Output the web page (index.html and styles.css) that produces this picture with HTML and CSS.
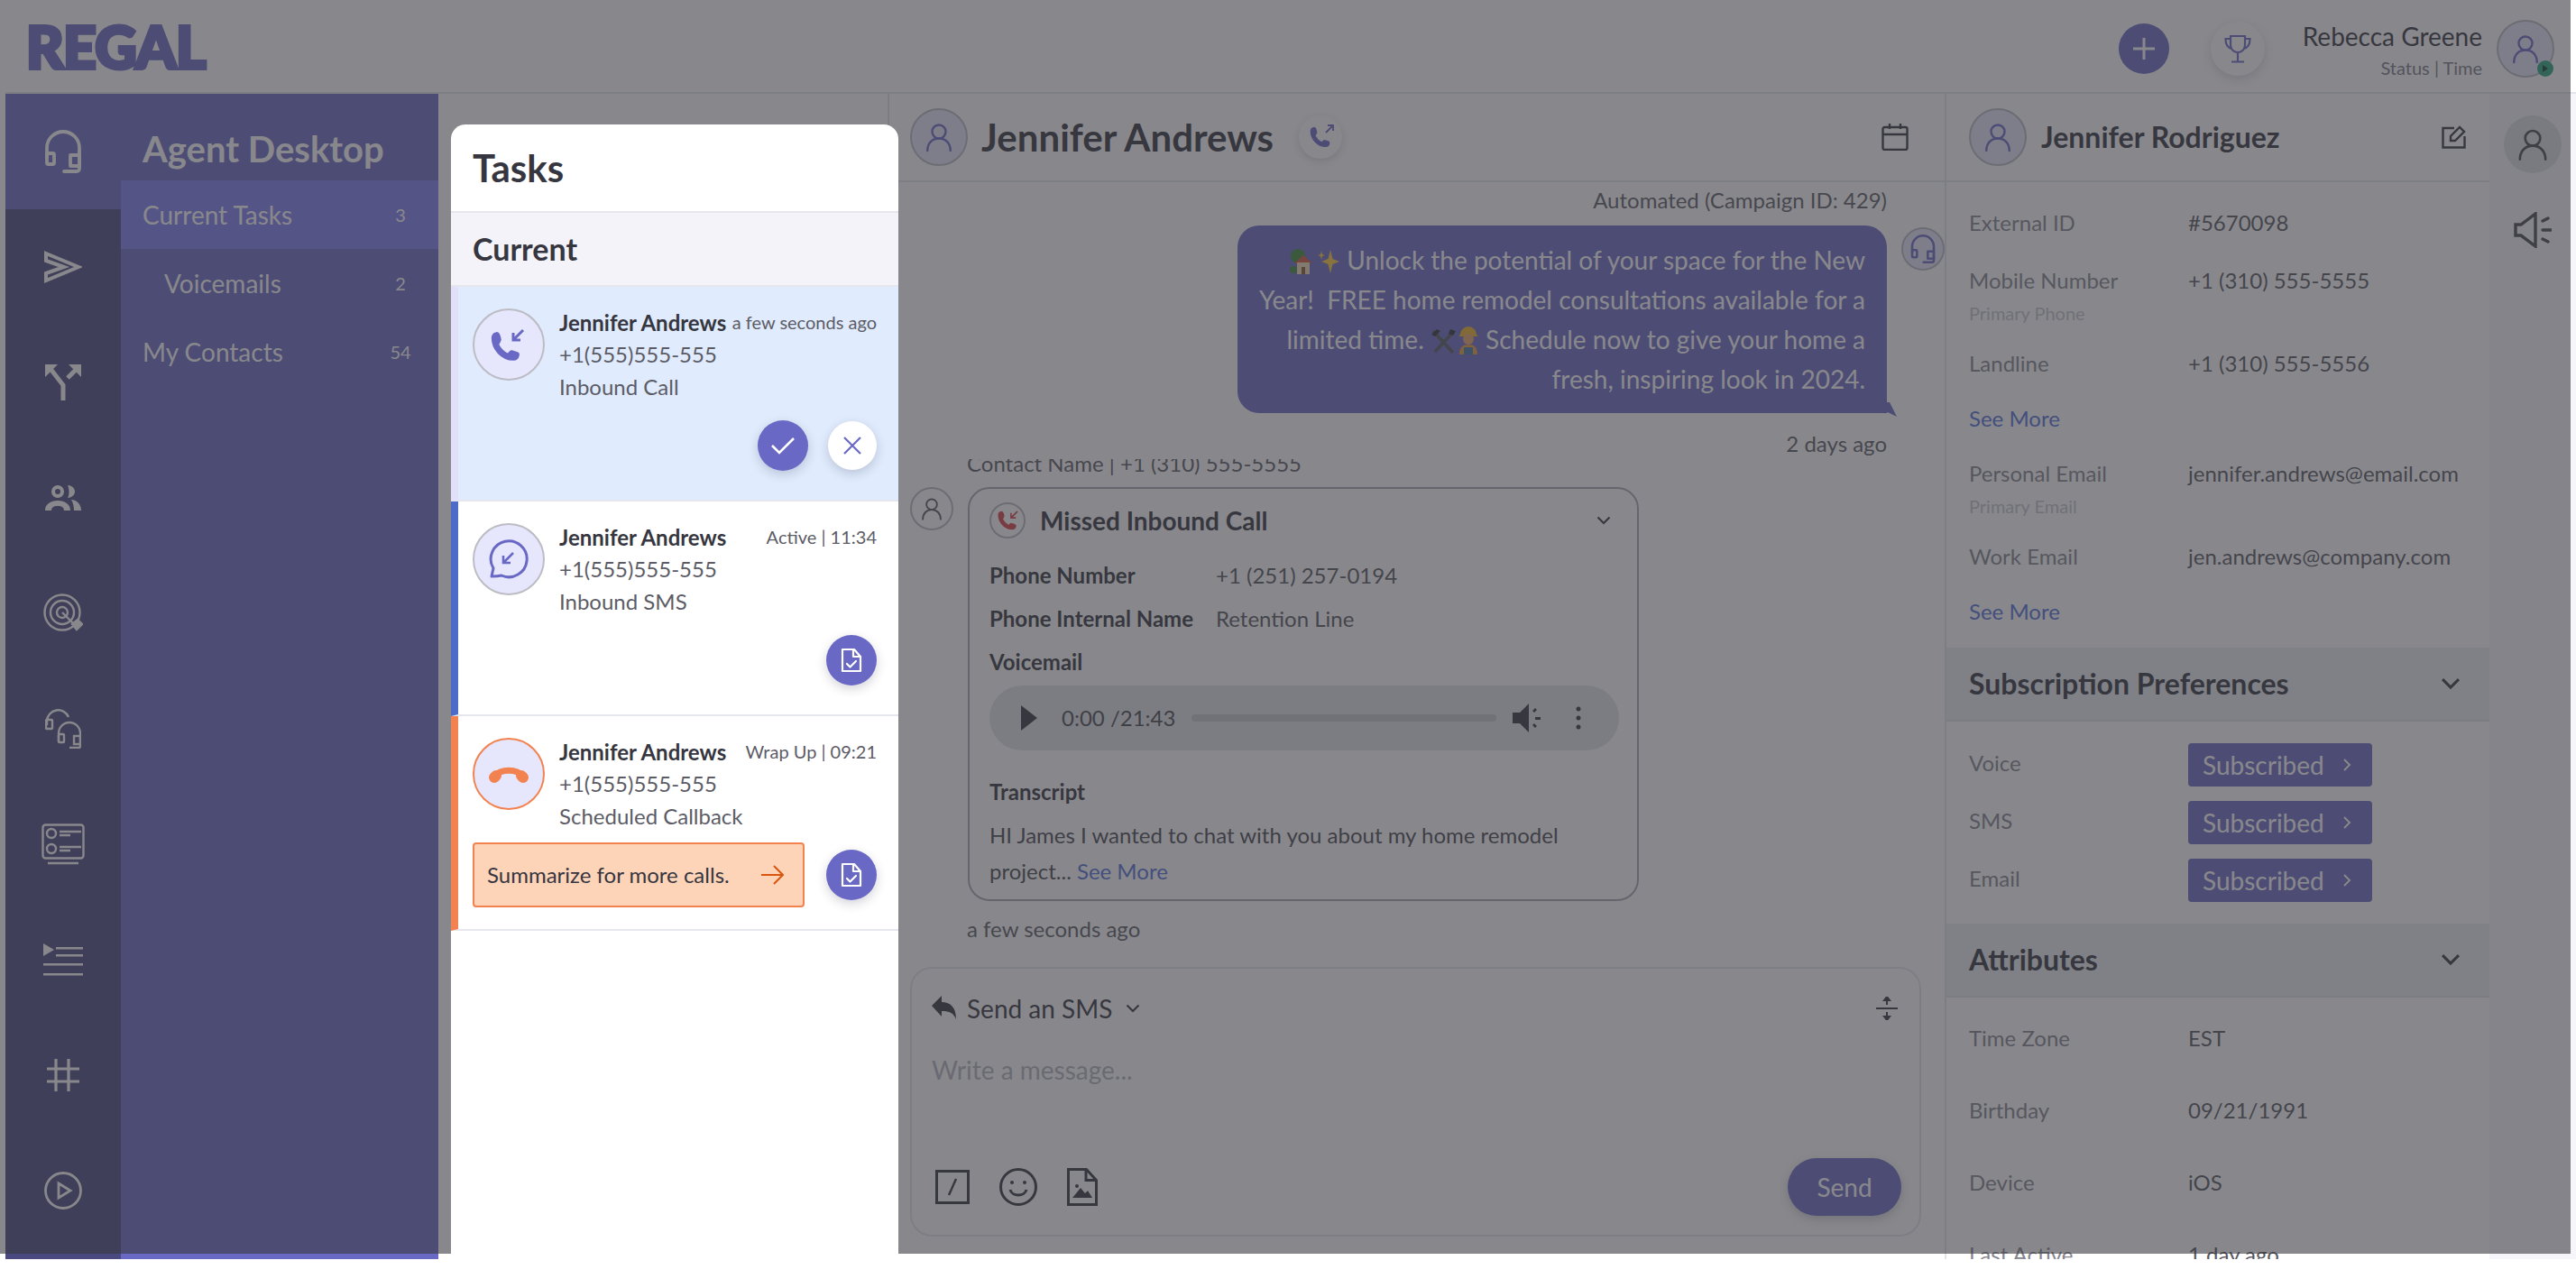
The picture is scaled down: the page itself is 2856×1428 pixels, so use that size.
FILE: index.html
```html
<!DOCTYPE html>
<html lang="en">
<head>
  <meta charset="UTF-8">
  <title>Regal - Agent Desktop</title>
  <link rel="stylesheet" href="styles.css">
</head>
<body>
  <svg class="sprite" width="0" height="0">
    <symbol id="i-user" viewBox="0 0 24 24"><g fill="none" stroke="currentColor" stroke-width="1.6" stroke-linecap="round"><circle cx="12" cy="8" r="5"/><path d="M3.5 22c0-5.5 3.6-9 8.5-9s8.500 3.5 8.500 9"/></g></symbol>
    <symbol id="i-phone" viewBox="0 0 24 24"><path fill="currentColor" stroke="currentColor" stroke-width="1.4" stroke-linejoin="round" d="M6.62 10.79c1.44 2.83 3.76 5.14 6.59 6.59l1.7-1.7c.5-.5.9-.5 1.5-.3 1 .3 2 .5 2.8.9.8.3 1.2.8 1 1.6-.3 1.5-1.5 2.9-3.2 2.9C9 20.8 3 13.5 3 6.5 3 4.7 4.2 3.5 5.6 3.2c.8-.2 1.3.2 1.6 1 .4.9.6 1.8.9 2.8.2.6.2 1-.3 1.5z"/></symbol>
    <symbol id="i-doc" viewBox="0 0 24 28"><g fill="none" stroke="currentColor" stroke-width="2.2" stroke-linejoin="round" stroke-linecap="round"><path d="M2 2h13l7 8v16H2z"/><path d="M14 2v8h8"/><path d="M7 18l3.5 3.5L17 15"/></g></symbol>
    <symbol id="i-chev" viewBox="0 0 16 10"><path d="M1.5 1.5L8 8l6.5-6.5" fill="none" stroke="currentColor" stroke-width="2.2"/></symbol>
    <symbol id="i-headset" viewBox="0 0 40 48"><g fill="none" stroke="currentColor" stroke-width="3.8" stroke-linecap="round" stroke-linejoin="round"><path d="M2 30V20a18 18 0 0 1 36 0v20"/><rect x="2" y="26" width="8" height="12" rx="1.5"/><rect x="28" y="28" width="10" height="12"/><path d="M38 40v3a3 3 0 0 1-3 3H21"/></g></symbol>
  </svg>

  <div class="app">
    <header class="topbar">
      <div class="logo">REGAL</div>
      <div class="topbar-right">
        <button class="add-btn"><svg width="28" height="28" viewBox="0 0 28 28"><path d="M14 2v24M2 14h24" stroke="currentColor" stroke-width="3"/></svg></button>
        <div class="trophy-btn"><svg width="30" height="32" viewBox="0 0 30 32" fill="none" stroke="currentColor" stroke-width="2.2"><path d="M7 2h16v10a8 8 0 0 1-16 0z"/><path d="M7 5H1.5c0 6 2 10 7 11M23 5h5.5c0 6-2 10-7 11M15 20v10M8 30.5h14"/></svg></div>
        <div class="me">
          <div class="me-name">Rebecca Greene</div>
          <div class="me-status">Status | Time</div>
        </div>
        <div class="avatar avatar-me">
          <svg width="36" height="36"><use href="#i-user"/></svg>
          <span class="online"><svg width="8" height="8" viewBox="0 0 8 8"><path d="M1 0l6 4-6 4z" fill="#0e3f30"/></svg></span>
        </div>
      </div>
    </header>

    <div class="workspace">
      <nav class="rail">
        <a class="rail-item active"><svg width="40" height="48"><use href="#i-headset"/></svg></a>
        <a class="rail-item"><svg width="42" height="36" viewBox="0 0 42 36"><path d="M2 3l36 15L2 33v-8l20-7L2 11z" fill="none" stroke="currentColor" stroke-width="4"/></svg></a>
        <a class="rail-item"><svg width="40" height="40" viewBox="0 0 40 40"><path d="M20 40V23L6 5M25 15L36 4" fill="none" stroke="currentColor" stroke-width="5"/><path d="M0 0h14L0 14zM40 0H26l14 14z" fill="currentColor"/></svg></a>
        <a class="rail-item"><svg width="40" height="28" viewBox="0 0 40 28"><circle cx="14" cy="7" r="5" fill="none" stroke="currentColor" stroke-width="4"/><path d="M25 0c4 0 8 3 8 7s-4 7-8 7c2-3 2-10 0-14zM0 28c0-7 6-11 14-11s14 4 14 11h-7c0-3-2-5-7-5s-7 2-7 5zM29 16c6 0 11 5 11 12h-8c0-4-1-9-3-12z" fill="currentColor"/></svg></a>
        <a class="rail-item"><svg width="44" height="44" viewBox="0 0 44 44" fill="none" stroke="currentColor" stroke-width="2.4"><circle cx="21" cy="21" r="19.5"/><circle cx="21" cy="21" r="13"/><circle cx="21" cy="21" r="6"/><path d="M21 21l14 14"/><path d="M32 34l6-5 5 5-6 6z" fill="currentColor"/></svg></a>
        <a class="rail-item"><svg width="40" height="44" viewBox="0 0 40 44" fill="none" stroke="currentColor" stroke-width="2.4"><path d="M2 18V13a12.5 12.5 0 0 1 24-4"/><rect x="1" y="12" width="7" height="10" rx="1"/><path d="M15 36V27a12 12 0 0 1 24 0v13"/><rect x="15" y="28" width="6" height="9" rx="1"/><rect x="32" y="30" width="7" height="9"/><path d="M39 39v2a2 2 0 0 1-2 2H27"/></svg></a>
        <a class="rail-item"><svg width="48" height="46" viewBox="0 0 48 46" fill="none" stroke="currentColor" stroke-width="2.4"><rect x="1.5" y="1.5" width="45" height="37" rx="3"/><circle cx="11" cy="11" r="5"/><circle cx="11" cy="28" r="5"/><path d="M20 9h24M20 13h12M20 26h24M20 30h12M7 44h34"/></svg></a>
        <a class="rail-item"><svg width="44" height="36" viewBox="0 0 44 36" fill="currentColor"><path d="M0 0l12 7-12 7z"/><path d="M14 4h30v2.5H14zM14 12h30v2.5H14zM0 22h44v2.5H0zM0 33h44v2.5H0z"/></svg></a>
        <a class="rail-item"><svg width="36" height="36" viewBox="0 0 36 36"><path d="M10 0v36M24 0v36M0 11h36M0 25h36" stroke="currentColor" stroke-width="3.2"/></svg></a>
        <a class="rail-item"><svg width="42" height="42" viewBox="0 0 42 42" fill="none" stroke="currentColor" stroke-width="2.8"><circle cx="21" cy="21" r="19.5"/><path d="M16 13l13 8-13 8z"/></svg></a>
      </nav>

      <aside class="nav-panel">
        <h2 class="nav-title">Agent Desktop</h2>
        <a class="nav-row selected"><span>Current Tasks</span><span class="nav-count">3</span></a>
        <a class="nav-row nested"><span>Voicemails</span><span class="nav-count">2</span></a>
        <a class="nav-row"><span>My Contacts</span><span class="nav-count">54</span></a>
      </aside>

      <div class="task-col"></div>

      <section class="chat">
        <div class="chat-head">
          <div class="avatar avatar-lg"><svg width="36" height="36"><use href="#i-user"/></svg></div>
          <h1 class="chat-name">Jennifer Andrews</h1>
          <div class="call-chip"><svg width="28" height="28"><use href="#i-phone"/></svg><svg class="chip-arrow" width="10" height="10" viewBox="0 0 10 10"><path d="M1 9l8-8M3 1h6v6" fill="none" stroke="currentColor" stroke-width="1.8"/></svg></div>
          <svg class="calendar" width="30" height="30" viewBox="0 0 30 30" fill="none" stroke="currentColor" stroke-width="2.4"><rect x="1.5" y="4" width="27" height="25" rx="2"/><path d="M1.5 12h27M9 0v6M21 0v6"/></svg>
        </div>

        <div class="messages">
          <div class="meta meta-right">Automated (Campaign ID: 429)</div>
          <div class="out-row">
            <div class="bubble">
              <svg class="emoji" width="30" height="30" viewBox="0 0 30 30"><circle cx="9" cy="9" r="8" fill="#3d8a3a"/><circle cx="4" cy="24" r="4" fill="#3d8a3a"/><path d="M5 17l10-9 10 9z" fill="#d8553d"/><rect x="8" y="16" width="14" height="13" fill="#f0dcb4"/><rect x="13" y="21" width="4" height="8" fill="#8a5a30"/></svg><svg class="emoji" width="26" height="30" viewBox="0 0 26 30" fill="#ffcb3d"><path d="M15 2l2.5 10L25 15l-7.5 3L15 28l-2.5-10L5 15l7.5-3z"/><path d="M5 3l1 4 3 1-3 1-1 4-1-4-3-1 3-1z"/></svg> Unlock the potential of your space for the New Year!&nbsp; FREE home remodel consultations available for a limited time. <svg class="emoji" width="30" height="30" viewBox="0 0 30 30"><path d="M3 4l22 24M26 4L5 27" stroke="#555a60" stroke-width="3.5"/><path d="M1 8l6-6 4 2-6 6zM22 2l6 2-3 5-5-2z" fill="#2f3238"/></svg><svg class="emoji" width="24" height="32" viewBox="0 0 24 32"><path d="M3 10a9 9 0 0 1 18 0l2 2H1z" fill="#f0b429"/><circle cx="12" cy="15" r="6" fill="#e8a96d"/><path d="M2 32c0-8 4-11 10-11s10 3 10 11z" fill="#e8a035"/><path d="M7 24h10v8H7z" fill="#4a78b0"/></svg> Schedule now to give your home a fresh, inspiring look in 2024.
              <span class="bubble-tail"></span>
            </div>
            <div class="avatar avatar-sm agent"><svg width="28" height="32"><use href="#i-headset"/></svg></div>
          </div>
          <div class="meta meta-right meta-ago">2 days ago</div>
          <div class="contact-line"><span>Contact Name | +1 (310) 555-5555</span></div>

          <div class="in-row">
            <div class="avatar avatar-sm plain"><svg width="28" height="28"><use href="#i-user"/></svg></div>
            <article class="call-card">
              <div class="card-title">
                <div class="avatar avatar-xs"><svg width="26" height="26"><use href="#i-phone"/></svg><svg class="chip-arrow" width="9" height="9" viewBox="0 0 10 10"><path d="M9 1L1 9M1 3v6h6" fill="none" stroke="currentColor" stroke-width="1.8"/></svg></div>
                <h3>Missed Inbound Call</h3>
                <svg class="card-chev" width="16" height="10"><use href="#i-chev"/></svg>
              </div>
              <div class="card-line first"><b>Phone Number</b><span>+1 (251) 257-0194</span></div>
              <div class="card-line"><b>Phone Internal Name</b><span>Retention Line</span></div>
              <div class="card-line"><b>Voicemail</b></div>
              <div class="player">
                <svg class="play" width="18" height="28" viewBox="0 0 18 28"><path d="M0 0l18 14L0 28z" fill="currentColor"/></svg>
                <span class="player-time">0:00 /21:43</span>
                <span class="player-track"></span>
                <svg width="34" height="32" viewBox="0 0 34 32" fill="currentColor"><path d="M0 10h8L18 0v32L8 22H0z"/><path d="M22 8l3-3 2 2-3 3zM25 15h6v3h-6zM22 24l2-2 3 3-2 2z"/></svg>
                <svg class="player-more" width="6" height="26" viewBox="0 0 6 26" fill="currentColor"><circle cx="3" cy="3" r="2.5"/><circle cx="3" cy="13" r="2.5"/><circle cx="3" cy="23" r="2.5"/></svg>
              </div>
              <div class="card-line transcript"><b>Transcript</b></div>
              <p class="card-text">HI James I wanted to chat with you about my home remodel project... <a class="link">See More</a></p>
            </article>
          </div>
          <div class="meta meta-left">a few seconds ago</div>
        </div>

        <div class="composer">
          <div class="composer-top">
            <svg width="28" height="28" viewBox="0 0 28 28" fill="currentColor"><path d="M0 11L11 0v7c10 0 16 6 16 19-3-7-7-9-16-9v6z"/></svg>
            <span>Send an SMS</span>
            <svg width="16" height="10"><use href="#i-chev"/></svg>
            <svg class="composer-expand" width="24" height="26" viewBox="0 0 24 26" fill="none" stroke="currentColor" stroke-width="2"><path d="M0 13h24M12 2v7M12 17v7"/><path d="M9 4l3-4 3 4zM9 22l3 4 3-4z" fill="currentColor"/></svg>
          </div>
          <div class="composer-input">Write a message...</div>
          <div class="composer-bottom">
            <svg width="38" height="38" viewBox="0 0 38 38" fill="none" stroke="currentColor" stroke-width="3"><rect x="1.5" y="1.5" width="35" height="35"/><path d="M15 28l8-18" stroke-width="2.4"/></svg>
            <svg width="42" height="42" viewBox="0 0 42 42" fill="none" stroke="currentColor" stroke-width="3"><circle cx="21" cy="21" r="19.5"/><path d="M12 24c2 8 16 8 18 0"/><circle cx="14" cy="16" r="2" fill="currentColor" stroke="none"/><circle cx="28" cy="16" r="2" fill="currentColor" stroke="none"/></svg>
            <svg width="34" height="42" viewBox="0 0 34 42" fill="none" stroke="currentColor" stroke-width="3"><path d="M1.5 1.5h20l11 12v27h-31z"/><path d="M21 1.5v12h11"/><circle cx="11" cy="20" r="2" fill="currentColor" stroke="none"/><path d="M6 33l9-11 5 6 3-3 5 8z" fill="currentColor" stroke="none"/></svg>
            <button class="send-btn">Send</button>
          </div>
        </div>
      </section>

      <section class="details">
        <div class="details-head">
          <div class="avatar avatar-lg"><svg width="36" height="36"><use href="#i-user"/></svg></div>
          <h2>Jennifer Rodriguez</h2>
          <svg class="edit" width="28" height="26" viewBox="0 0 28 26" fill="none" stroke="currentColor" stroke-width="2.4"><path d="M14 3H1.5v21.5h24V12"/><path d="M10 17v-5L20 2l5 5-10 10z"/></svg>
        </div>
        <div class="info">
          <div class="field"><span class="label">External ID</span><span class="value">#5670098</span></div>
          <div class="field"><span class="label">Mobile Number<small>Primary Phone</small></span><span class="value">+1 (310) 555-5555</span></div>
          <div class="field after-sub"><span class="label">Landline</span><span class="value">+1 (310) 555-5556</span></div>
          <a class="link see-more">See More</a>
          <div class="field after-more"><span class="label">Personal Email<small>Primary Email</small></span><span class="value">jennifer.andrews@email.com</span></div>
          <div class="field after-sub"><span class="label">Work Email</span><span class="value">jen.andrews@company.com</span></div>
          <a class="link see-more">See More</a>
        </div>
        <div class="section-head"><h3>Subscription Preferences</h3><svg width="22" height="14" viewBox="0 0 16 10"><use href="#i-chev"/></svg></div>
        <div class="subs">
          <div class="sub-row"><span class="label">Voice</span><button class="sub-btn">Subscribed <svg width="10" height="16" viewBox="0 0 10 16"><path d="M2 2l6 6-6 6" fill="none" stroke="currentColor" stroke-width="2"/></svg></button></div>
          <div class="sub-row"><span class="label">SMS</span><button class="sub-btn">Subscribed <svg width="10" height="16" viewBox="0 0 10 16"><path d="M2 2l6 6-6 6" fill="none" stroke="currentColor" stroke-width="2"/></svg></button></div>
          <div class="sub-row"><span class="label">Email</span><button class="sub-btn">Subscribed <svg width="10" height="16" viewBox="0 0 10 16"><path d="M2 2l6 6-6 6" fill="none" stroke="currentColor" stroke-width="2"/></svg></button></div>
        </div>
        <div class="section-head"><h3>Attributes</h3><svg width="22" height="14" viewBox="0 0 16 10"><use href="#i-chev"/></svg></div>
        <div class="attrs">
          <div class="field"><span class="label">Time Zone</span><span class="value">EST</span></div>
          <div class="field"><span class="label">Birthday</span><span class="value">09/21/1991</span></div>
          <div class="field"><span class="label">Device</span><span class="value">iOS</span></div>
          <div class="field"><span class="label">Last Active</span><span class="value">1 day ago</span></div>
        </div>
      </section>

      <aside class="side-rail">
        <div class="side-user"><svg width="40" height="40"><use href="#i-user"/></svg></div>
        <svg class="side-horn" width="42" height="40" viewBox="0 0 42 40" fill="none" stroke="currentColor" stroke-width="3.4"><path d="M2 14v12h6l16 12V2L8 14z"/><path d="M32 10l6-3M32 20h9M32 30l6 3" stroke-linecap="round"/></svg>
      </aside>
    </div>
  </div>

  <div class="scrim"></div>

  <div class="tasks-panel">
    <h2 class="tasks-title">Tasks</h2>
    <h3 class="tasks-group">Current</h3>

    <div class="task ringing">
      <div class="task-top">
        <div class="task-icon">
          <svg class="task-phone" width="40" height="40"><use href="#i-phone"/></svg>
          <svg class="task-arrow" width="16" height="16" viewBox="0 0 16 16"><path d="M14 2L4 12M3 5v8h8" fill="none" stroke="currentColor" stroke-width="3"/></svg>
        </div>
        <div class="task-text">
          <div class="task-line"><b>Jennifer Andrews</b><span>a few seconds ago</span></div>
          <div>+1(555)555-555</div>
          <div>Inbound Call</div>
        </div>
      </div>
      <div class="task-actions">
        <button class="round-btn"><svg width="28" height="22" viewBox="0 0 28 22"><path d="M2 11l8 8L26 3" fill="none" stroke="#fff" stroke-width="2.6"/></svg></button>
        <button class="round-btn light"><svg width="22" height="22" viewBox="0 0 22 22"><path d="M2 2l18 18M20 2L2 20" fill="none" stroke="currentColor" stroke-width="2.2"/></svg></button>
      </div>
    </div>

    <div class="task active">
      <div class="task-top">
        <div class="task-icon">
          <svg width="44" height="44" viewBox="0 0 44 44" fill="none" stroke="currentColor" stroke-width="3"><path d="M3 41l2-9A20 20 0 1 1 14 40c-4 1-7 1-11 1z" stroke-linejoin="round"/><path d="M27 15L16 26M16 18v8h8" stroke-width="2.6"/></svg>
        </div>
        <div class="task-text">
          <div class="task-line"><b>Jennifer Andrews</b><span>Active | 11:34</span></div>
          <div>+1(555)555-555</div>
          <div>Inbound SMS</div>
        </div>
      </div>
      <div class="task-actions">
        <button class="round-btn"><svg width="24" height="28"><use href="#i-doc"/></svg></button>
      </div>
    </div>

    <div class="task wrapup">
      <div class="task-top">
        <div class="task-icon">
          <svg width="46" height="22" viewBox="0 0 46 22" fill="none" stroke="currentColor" stroke-linecap="round"><path d="M7 14C14 5 32 5 39 14" stroke-width="7"/><path d="M7 15l2-2M39 15l-2-2" stroke-width="12"/></svg>
        </div>
        <div class="task-text">
          <div class="task-line"><b>Jennifer Andrews</b><span>Wrap Up | 09:21</span></div>
          <div>+1(555)555-555</div>
          <div>Scheduled Callback</div>
        </div>
      </div>
      <div class="task-actions">
        <a class="summarize">Summarize for more calls.<svg width="26" height="24" viewBox="0 0 26 24"><path d="M0 12h24M14 2l10 10-10 10" fill="none" stroke="currentColor" stroke-width="2"/></svg></a>
        <button class="round-btn"><svg width="24" height="28"><use href="#i-doc"/></svg></button>
      </div>
    </div>
  </div>
</body>
</html>
```

FILE: styles.css
```css
* {
  box-sizing: border-box;
}
html, body {
  margin: 0;
  padding: 0;
  background: #fff;
}
body {
  font-family: 'Lato', 'Liberation Sans', sans-serif;
  font-size: 24px;
  line-height: 36px;
  color: #363640;
  overflow: hidden;
}
h1, h2, h3, p {
  margin: 0;
}
button {
  font-family: inherit;
  border: none;
  padding: 0;
}
.sprite {
  position: absolute;
}
.app {
  width: 2856px;
  height: 1396px;
  padding-left: 6px;
  display: flex;
  flex-direction: column;
  overflow: hidden;
}

/* top bar */
.topbar {
  height: 104px;
  flex: none;
  display: flex;
  align-items: center;
  justify-content: space-between;
  padding: 6px 24px 0 24px;
  border-bottom: 2px solid #e4e4ec;
}
.logo {
  font-size: 64px;
  line-height: 64px;
  font-weight: 900;
  letter-spacing: -.5px;
  color: #6969c5;
  -webkit-text-stroke: 4px #6969c5;
  margin-left: -1px;
  margin-top: -5px;
}
.topbar-right {
  display: flex;
  align-items: center;
}
.add-btn {
  width: 56px;
  height: 56px;
  border-radius: 50%;
  background: #6969c5;
  color: #fff;
  display: flex;
  align-items: center;
  justify-content: center;
  margin-right: 46px;
}
.trophy-btn {
  width: 60px;
  height: 60px;
  border-radius: 50%;
  background: #fff;
  color: #6969c5;
  display: flex;
  align-items: center;
  justify-content: center;
  box-shadow: 0 4px 12px rgba(40, 40, 70, .2);
  margin-right: 42px;
}
.me {
  text-align: right;
  margin-right: 16px;
  margin-top: 6px;
}
.me-name {
  font-size: 28px;
  line-height: 36px;
}
.me-status {
  font-size: 20px;
  line-height: 34px;
  color: #7c7c88;
}
.avatar {
  flex: none;
  border-radius: 50%;
  background: #e6e6fc;
  border: 2px solid #b9b9c2;
  color: #6969c5;
  display: flex;
  align-items: center;
  justify-content: center;
  position: relative;
}
.avatar-me {
  width: 64px;
  height: 64px;
}
.online {
  position: absolute;
  right: -1px;
  bottom: -1px;
  width: 18px;
  height: 18px;
  border-radius: 50%;
  background: #2ba67e;
  display: flex;
  align-items: center;
  justify-content: center;
}
.avatar-lg {
  width: 64px;
  height: 64px;
}
.avatar-sm {
  width: 48px;
  height: 48px;
}
.avatar-sm.plain {
  background: #fff;
  color: #57575f;
}
.avatar-xs {
  width: 40px;
  height: 40px;
  background: #fff;
  color: #d9414a;
}

.workspace {
  flex: 1;
  display: flex;
  min-height: 0;
}

/* left rail */
.rail {
  width: 128px;
  flex: none;
  background: #4a4a80;
  display: flex;
  flex-direction: column;
}
.rail-item {
  height: 128px;
  flex: none;
  display: flex;
  align-items: center;
  justify-content: center;
  color: #fff;
}
.rail-item.active {
  background: #6969c5;
}
.nav-panel {
  width: 352px;
  flex: none;
  background: #6969c5;
  color: #fff;
}
.nav-title {
  height: 96px;
  padding: 37px 24px 0;
  font-size: 40px;
  line-height: 48px;
  font-weight: 700;
}
.nav-row {
  height: 76px;
  display: flex;
  align-items: center;
  justify-content: space-between;
  padding: 0 30px 0 24px;
  font-size: 28px;
}
.nav-row.selected {
  background: #7f7ef0;
}
.nav-row.nested {
  padding-left: 48px;
}
.nav-count {
  font-size: 20px;
  min-width: 24px;
  text-align: center;
}

.task-col {
  width: 500px;
  flex: none;
  border-right: 2px solid #e4e4ec;
}

/* conversation */
.chat {
  width: 1172px;
  flex: none;
  display: flex;
  flex-direction: column;
  border-right: 2px solid #e4e4ec;
}
.chat-head {
  height: 98px;
  flex: none;
  display: flex;
  align-items: center;
  padding: 0 40px 0 23px;
  border-bottom: 2px solid #e4e4ec;
}
.chat-name {
  font-size: 42px;
  line-height: 52px;
  font-weight: 700;
  margin-left: 15px;
}
.call-chip {
  width: 48px;
  height: 48px;
  margin-left: 28px;
  border-radius: 50%;
  background: #fff;
  color: #6969c5;
  box-shadow: 0 3px 10px rgba(40, 40, 70, .2);
  display: flex;
  align-items: center;
  justify-content: center;
  position: relative;
}
.chip-arrow {
  position: absolute;
  top: 10px;
  right: 9px;
}
.calendar {
  margin-left: auto;
}
.messages {
  flex: 1;
  min-height: 0;
  overflow: hidden;
  padding-top: 2px;
}
.meta {
  line-height: 36px;
  color: #5c5c66;
}
.meta-right {
  text-align: right;
  padding-right: 64px;
}
.meta-ago {
  margin-top: 16px;
}
.meta-left {
  padding-left: 86px;
  margin-top: 13px;
}
.out-row {
  display: flex;
  justify-content: flex-end;
  align-items: flex-start;
  gap: 16px;
  margin-top: 10px;
}
.bubble {
  position: relative;
  width: 720px;
  height: 208px;
  padding: 16px 24px 16px 20px;
  background: #6969c5;
  color: #fff;
  border-radius: 24px 24px 0 24px;
  font-size: 28px;
  line-height: 44px;
  text-align: right;
}
.emoji {
  vertical-align: -6px;
}
.bubble-tail {
  position: absolute;
  right: -11px;
  bottom: -4px;
  width: 16px;
  height: 16px;
  background: #6969c5;
  clip-path: polygon(0 0, 50% 0, 100% 100%, 40% 70%, 0 70%);
}
.agent {
  margin-top: 2px;
}
.contact-line {
  height: 23px;
  margin-top: -1px;
  padding-left: 86px;
  overflow: hidden;
  display: flex;
  align-items: flex-end;
  color: #5c5c66;
}
.contact-line span {
  flex: none;
}
.in-row {
  display: flex;
  gap: 16px;
  padding-left: 23px;
  margin-top: 8px;
}
.call-card {
  width: 744px;
  height: 459px;
  border: 2px solid #a8a8b4;
  border-radius: 24px;
  padding: 15px 22px 0;
}
.card-title {
  display: flex;
  align-items: center;
  height: 40px;
}
.card-title h3 {
  font-size: 28px;
  font-weight: 700;
  margin-left: 16px;
}
.card-title .chip-arrow {
  top: 7px;
  right: 6px;
}
.card-chev {
  margin-left: auto;
  margin-right: 7px;
}
.card-line {
  display: flex;
  margin-top: 12px;
  color: #57575f;
}
.card-line.first {
  margin-top: 23px;
}
.card-line b {
  width: 251px;
  color: #363640;
}
.player {
  width: 698px;
  height: 72px;
  margin-top: 8px;
  border-radius: 36px;
  background: #e2e4e6;
  display: flex;
  align-items: center;
  padding-left: 35px;
}
.player-time {
  margin-left: 27px;
  width: 144px;
  flex: none;
  color: #4a4a52;
}
.player-track {
  width: 338px;
  height: 8px;
  border-radius: 4px;
  background: #c6c8cc;
  margin-right: 18px;
}
.player-more {
  margin-left: 36px;
}
.card-line.transcript {
  margin-top: 28px;
}
.card-text {
  margin-top: 10px;
  line-height: 40px;
  color: #4a4a52;
}
.link {
  color: #5470d8;
}

/* reply box */
.composer {
  flex: none;
  height: 299px;
  margin: 0 26px 25px 23px;
  border: 2px solid #e4e4ec;
  border-radius: 24px;
  padding: 26px 20px 21px 22px;
  display: flex;
  flex-direction: column;
}
.composer-top {
  display: flex;
  align-items: center;
  gap: 11px;
  font-size: 28px;
}
.composer-top span {
  margin-right: 4px;
}
.composer-expand {
  margin-left: auto;
  margin-right: 4px;
}
.composer-input {
  margin-top: 32px;
  font-size: 28px;
  color: #b4b4be;
}
.composer-bottom {
  margin-top: auto;
  display: flex;
  align-items: center;
  gap: 33px;
  padding-left: 4px;
}
.send-btn {
  margin-left: auto;
  width: 126px;
  height: 64px;
  border-radius: 32px;
  background: #6969c5;
  color: #fff;
  font-size: 28px;
  box-shadow: 0 4px 12px rgba(40, 40, 70, .25);
}

/* contact details */
.details {
  width: 602px;
  flex: none;
  overflow: hidden;
}
.details-head {
  height: 98px;
  display: flex;
  align-items: center;
  padding: 0 25px;
  border-bottom: 2px solid #e4e4ec;
}
.details-head h2 {
  font-size: 32px;
  font-weight: 700;
  margin-left: 16px;
}
.edit {
  margin-left: auto;
}
.info {
  padding: 27px 25px 22px;
}
.field {
  display: flex;
  margin-top: 28px;
}
.info .field:first-child {
  margin-top: 0;
}
.field.after-sub {
  margin-top: 20px;
}
.field.after-more {
  margin-top: 25px;
}
.label {
  width: 243px;
  flex: none;
  color: #85858f;
}
.label small {
  display: block;
  font-size: 20px;
  color: #c4c4cc;
}
.value {
  color: #57575f;
}
.see-more {
  display: block;
  margin-top: 25px;
}
.section-head {
  height: 82px;
  padding: 0 32px 0 25px;
  background: #e8edf0;
  border-bottom: 2px solid #dfe3e8;
  display: flex;
  align-items: center;
  justify-content: space-between;
}
.section-head h3 {
  font-size: 32px;
  font-weight: 700;
}
.subs {
  padding: 24px 25px;
  display: flex;
  flex-direction: column;
  gap: 16px;
}
.sub-row {
  display: flex;
  align-items: center;
  height: 48px;
}
.sub-row .label {
  margin-top: -4px;
}
.sub-btn {
  width: 204px;
  height: 48px;
  border-radius: 4px;
  background: #6969c5;
  color: #fff;
  font-size: 28px;
  text-align: left;
  padding-left: 16px;
  display: flex;
  align-items: center;
  gap: 20px;
}
.attrs {
  padding: 27px 25px 0;
}
.attrs .field {
  margin-top: 44px;
}
.attrs .field:first-child {
  margin-top: 0;
}
.side-rail {
  flex: 1;
  background: #f5f5fa;
  color: #4a4a52;
  display: flex;
  flex-direction: column;
  align-items: center;
  padding-top: 24px;
}
.side-user {
  width: 64px;
  height: 64px;
  border-radius: 50%;
  background: #dcdee2;
  display: flex;
  align-items: center;
  justify-content: center;
}
.side-horn {
  margin-top: 43px;
}

/* modal layer */
.scrim {
  position: absolute;
  left: 0;
  top: 0;
  width: 2850px;
  height: 1390px;
  background: rgba(56, 56, 64, .6);
}
.tasks-panel {
  position: absolute;
  left: 500px;
  top: 138px;
  width: 496px;
  height: 1258px;
  background: #fff;
  border-radius: 16px 16px 0 0;
}
.tasks-title {
  height: 98px;
  padding: 0 24px;
  font-size: 42px;
  line-height: 96px;
  font-weight: 700;
  border-bottom: 2px solid #e6e6ee;
}
.tasks-group {
  height: 82px;
  padding: 0 24px;
  font-size: 34px;
  line-height: 80px;
  font-weight: 700;
  background: #f3f3f9;
  border-bottom: 2px solid #e6e6ee;
}
.task {
  height: 238px;
  padding: 22px 24px 24px 24px;
  border-bottom: 2px solid #e6e6ee;
  border-left: 8px solid transparent;
  display: flex;
  flex-direction: column;
  justify-content: space-between;
}
.task-top {
  display: flex;
  margin-left: -8px;
}
.task-icon {
  width: 80px;
  height: 80px;
  flex: none;
  margin-top: 2px;
  border-radius: 50%;
  background: #e6e6fc;
  border: 2px solid #bcbcc4;
  color: #6969c5;
  display: flex;
  align-items: center;
  justify-content: center;
  position: relative;
}
.task-phone {
  margin: 4px 6px 0 0;
}
.task-arrow {
  position: absolute;
  top: 20px;
  right: 20px;
}
.task-text {
  flex: 1;
  margin-left: 16px;
  line-height: 35.5px;
  color: #5c5c66;
}
.task-line {
  height: 35px;
  display: flex;
  justify-content: space-between;
  align-items: center;
}
.task-line b {
  color: #363640;
}
.task-line span {
  font-size: 20px;
}
.ringing {
  background: #e0ebfd;
  border-left-color: #e2e0f8;
}
.active {
  border-left-color: #4f6bc9;
}
.wrapup {
  border-left-color: #f28350;
}
.wrapup .task-icon {
  border-color: #f28350;
  color: #f28350;
}
.task-actions {
  height: 72px;
  display: flex;
  align-items: center;
  justify-content: flex-end;
  gap: 22px;
  margin-left: -8px;
}
.round-btn {
  width: 56px;
  height: 56px;
  flex: none;
  border-radius: 50%;
  background: #6969c5;
  color: #fff;
  display: flex;
  align-items: center;
  justify-content: center;
  box-shadow: 0 4px 12px rgba(40, 40, 70, .2);
}
.round-btn.light {
  width: 54px;
  height: 54px;
  background: #fff;
  color: #6969c5;
}
.summarize {
  flex: 1;
  height: 72px;
  display: flex;
  align-items: center;
  justify-content: space-between;
  padding: 0 20px 0 14px;
  background: #fed4b8;
  border: 2px solid #f28350;
  border-radius: 4px;
  color: #363640;
  margin-right: 2px;
}
.summarize svg {
  color: #d9560e;
}
```
